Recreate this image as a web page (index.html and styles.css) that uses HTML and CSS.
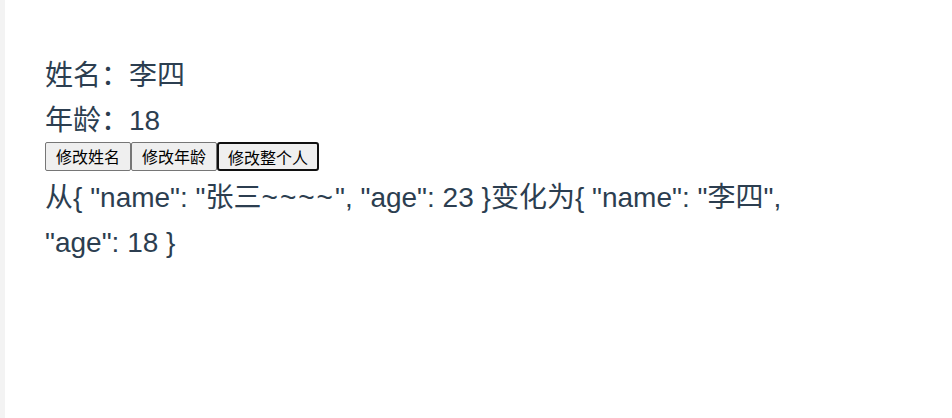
FILE: index.html
```html
<!DOCTYPE html>
<html lang="zh">
<head>
<meta charset="utf-8">
<title>watch</title>
<link rel="stylesheet" href="styles.css">
</head>
<body>
<div class="page">
  <div class="content">
    <div class="line">姓名：李四</div>
    <div class="line">年龄：18</div>
    <div class="buttons"><button class="btn">修改姓名</button><button class="btn">修改年龄</button><button class="btn focused">修改整个人</button></div>
    <div class="line">从{ "name": "张三<span class="tilde">~~~~</span>", "age": 23 }变化为{ "name": "李四", "age": 18 }</div>
  </div>
</div>
</body>
</html>
```
FILE: styles.css
```css
html, body {
  margin: 0;
  padding: 0;
  background: #ffffff;
}
.page {
  min-height: 418px;
  border-left: 5px solid #f3f3f3;
  box-sizing: border-box;
}
.content {
  width: 800px;
  padding: 53px 0 0 40px;
  color: #2c3e50;
  font-family: "Liberation Sans", "Noto Sans CJK SC", sans-serif;
  font-size: 28px;
  line-height: 45px;
}
.line {
  margin: 0;
}
.tilde {
  letter-spacing: 2px;
}
.buttons {
  display: flex;
  height: 33px;
  margin-top: -1px;
  align-items: flex-start;
}
.btn {
  box-sizing: border-box;
  height: 29px;
  padding: 0 10px;
  margin: 0;
  font-family: "Noto Sans CJK SC", sans-serif;
  font-size: 16px;
  line-height: 27px;
  color: #000;
  background: #efefef;
  border: 1px solid #767676;
  border-radius: 2px;
}
.btn.focused {
  border: 2px solid #101010;
  border-radius: 3px;
  padding: 0 9px;
}
```
